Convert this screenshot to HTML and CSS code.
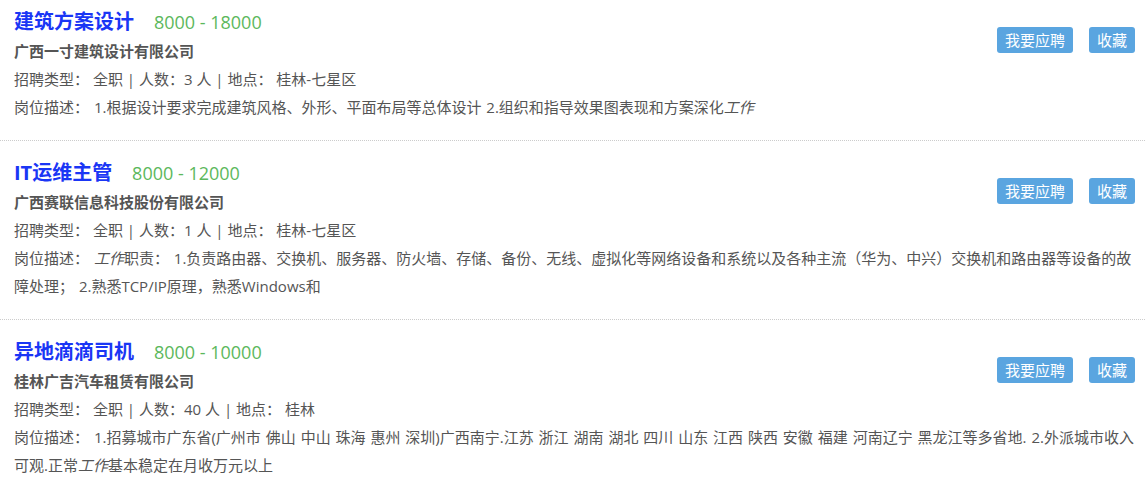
FILE: index.html
```html
<!DOCTYPE html>
<html lang="zh-CN">
<head>
  <meta charset="UTF-8">
  <title>职位列表</title>
  <link rel="stylesheet" href="styles.css">
</head>
<body>
  <ul class="job-list">
    <li class="job-item">
      <div class="job-actions">
        <a class="btn">我要应聘</a>
        <a class="btn">收藏</a>
      </div>
      <div class="job-head">
        <a class="job-title">建筑方案设计</a>
        <span class="job-salary">8000 - 18000</span>
      </div>
      <div class="job-company">广西一寸建筑设计有限公司</div>
      <div class="job-info">招聘类型： 全职 | 人数：3 人 | 地点： 桂林-七星区</div>
      <div class="job-desc">岗位描述： 1.根据设计要求完成建筑风格、外形、平面布局等总体设计 2.组织和指导效果图表现和方案深化<em>工作</em></div>
    </li>
    <li class="job-item">
      <div class="job-actions">
        <a class="btn">我要应聘</a>
        <a class="btn">收藏</a>
      </div>
      <div class="job-head">
        <a class="job-title">IT运维主管</a>
        <span class="job-salary">8000 - 12000</span>
      </div>
      <div class="job-company">广西赛联信息科技股份有限公司</div>
      <div class="job-info">招聘类型： 全职 | 人数：1 人 | 地点： 桂林-七星区</div>
      <div class="job-desc">岗位描述： <em>工作</em>职责： 1.负责路由器、交换机、服务器、防火墙、存储、备份、无线、虚拟化等网络设备和系统以及各种主流（华为、中兴）交换机和路由器等设备的故障处理； 2.熟悉TCP/IP原理，熟悉Windows和</div>
    </li>
    <li class="job-item">
      <div class="job-actions">
        <a class="btn">我要应聘</a>
        <a class="btn">收藏</a>
      </div>
      <div class="job-head">
        <a class="job-title">异地滴滴司机</a>
        <span class="job-salary">8000 - 10000</span>
      </div>
      <div class="job-company">桂林广吉汽车租赁有限公司</div>
      <div class="job-info">招聘类型： 全职 | 人数：40 人 | 地点： 桂林</div>
      <div class="job-desc">岗位描述： 1.招募城市广东省(广州市 佛山 中山 珠海 惠州 深圳)广西南宁.江苏 浙江 湖南 湖北 四川 山东 江西 陕西 安徽 福建 河南辽宁 黑龙江等多省地. 2.外派城市收入可观.正常<em>工作</em>基本稳定在月收万元以上</div>
    </li>
  </ul>
</body>
</html>
```

FILE: styles.css
```css
html, body {
  margin: 0;
  padding: 0;
  background: #fff;
  font-family: 'Open Sans', 'Noto Sans CJK SC', sans-serif;
  font-size: 15px;
  color: #555;
}
.job-list {
  list-style: none;
  margin: 0;
  padding: 0;
}
.job-item {
  padding: 17px 10px 19px 14px;
  border-bottom: 1px dotted #ccc;
}
.job-item:first-child {
  padding-top: 7px;
  padding-bottom: 19px;
}
.job-actions {
  float: right;
  margin-top: 20px;
  display: flex;
  gap: 16px;
}
.btn {
  display: block;
  height: 26px;
  line-height: 26px;
  padding: 0 8px;
  background: #5aa5e0;
  color: #fff;
  border-radius: 3px;
  font-size: 15px;
  cursor: pointer;
}
.job-head {
  line-height: 30px;
}
.job-title {
  font-size: 20px;
  font-weight: bold;
  color: #1a36f5;
  margin-right: 16px;
}
.job-salary {
  font-size: 18px;
  color: #5cb85c;
}
.job-company {
  font-weight: bold;
  line-height: 27px;
}
.job-info,
.job-desc {
  line-height: 28px;
}
.job-desc {
  word-spacing: 1px;
}
.job-desc em {
  font-style: italic;
}
```
